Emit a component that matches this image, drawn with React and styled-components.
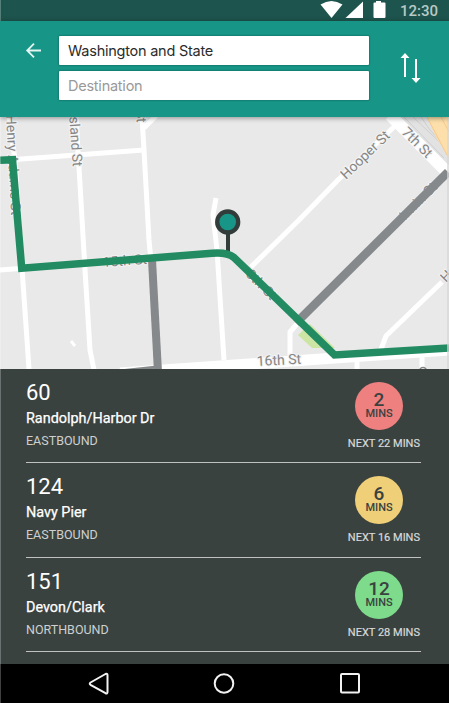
import React from "react";
import styled, { createGlobalStyle } from "styled-components";

const GlobalStyle = createGlobalStyle`
  *, *::before, *::after { box-sizing: border-box; }
  body { margin: 0; background: #000; }
`;

const Screen = styled.div`
  position: relative;
  display: flex;
  flex-direction: column;
  width: 449px;
  height: 703px;
  overflow: hidden;
  font-family: Roboto, sans-serif;

  &::after {
    content: "";
    position: absolute;
    inset: 0 auto 0 0;
    width: 1px;
    background: rgba(255, 255, 255, 0.25);
  }
`;

const StatusBar = styled.div`
  flex: 0 0 21px;
  display: flex;
  align-items: center;
  justify-content: flex-end;
  padding-right: 11px;
  background: #1d544d;
`;

const StatusIcons = styled.svg`
  display: block;
  width: 68px;
  height: 21px;
  margin-right: 12px;
  fill: #fff;
`;

const Clock = styled.span`
  width: 38px;
  font-size: 15px;
  font-weight: 500;
  line-height: 20px;
  color: #b9c9c6;
  white-space: nowrap;
`;

const SearchHeader = styled.header`
  position: relative;
  z-index: 1;
  flex: 0 0 96px;
  display: grid;
  grid-template-columns: 59px 310px 80px;
  background: #179586;
  box-shadow: 0 1px 5px rgba(0, 0, 0, 0.4);
`;

const IconButton = styled.button`
  display: flex;
  align-items: flex-start;
  padding: ${(p) => p.$pad};
  border: 0;
  background: none;

  svg {
    display: block;
  }
`;

const Fields = styled.div`
  display: flex;
  flex-direction: column;
  gap: 6px;
  padding-top: 15px;
`;

const Field = styled.div`
  height: 29px;
  padding-left: 9px;
  border-radius: 1px;
  background: #fff;
  box-shadow: 0 0 2px rgba(0, 0, 0, 0.5);
  font-family: Inter, sans-serif;
  font-size: 14.5px;
  line-height: 30px;
  letter-spacing: -0.24px;
  color: ${(p) => (p.$muted ? "#999" : "#2b2b2b")};
  white-space: nowrap;
`;

const MapCanvas = styled.svg`
  display: block;
  flex: 0 0 252px;
  width: 449px;
  height: 252px;
  background: #e9e9e9;
`;

const Street = styled.path`
  fill: none;
  stroke: #fff;
  stroke-width: ${(p) => p.$w || 5}px;
  stroke-linejoin: round;
`;

const TransitLine = styled.path`
  fill: none;
  stroke: ${(p) => p.$color};
  stroke-width: ${(p) => p.$w}px;
`;

const StreetName = styled.text`
  font-family: Roboto, sans-serif;
  font-size: 14px;
  fill: #858585;
  stroke: #f4f4f4;
  stroke-width: 2px;
  paint-order: stroke;
`;

const Arrivals = styled.ul`
  flex: 0 0 295px;
  margin: 0;
  padding: 0 28px 0 26px;
  background: #3a4240;
  list-style: none;
`;

const Arrival = styled.li`
  display: flex;
  justify-content: space-between;
  height: ${(p) => p.$height}px;
  padding-top: 10px;
  border-bottom: 1px solid #bfc2c1;
`;

const RouteNumber = styled.div`
  margin-top: 1px;
  font-size: 22px;
  line-height: 26px;
  color: #fff;
`;

const RouteName = styled.div`
  margin-top: 2px;
  font-size: 14.4px;
  line-height: 22px;
  -webkit-text-stroke: 0.25px #fff;
  color: #fff;
`;

const Direction = styled.div`
  font-size: 12.5px;
  line-height: 22px;
  color: #cdd0cf;
`;

const Timing = styled.div`
  display: flex;
  flex-direction: column;
  align-items: flex-end;
  padding-top: 3px;
`;

const TimeBadge = styled.div`
  display: flex;
  flex-direction: column;
  align-items: center;
  width: 48px;
  height: 48px;
  margin-right: 18px;
  padding-top: 9px;
  border-radius: 50%;
  background: ${(p) => p.$color};
  color: #3a4240;
`;

const Minutes = styled.span`
  font-size: 19px;
  font-weight: 500;
  line-height: 18px;
`;

const Unit = styled.span`
  font-size: 11px;
  font-weight: 500;
  line-height: 10px;
`;

const NextTime = styled.div`
  margin: 6px 1px 0 0;
  font-size: 11px;
  line-height: 15px;
  -webkit-text-stroke: 0.2px #d8dada;
  color: #d8dada;
  white-space: nowrap;
`;

const NavBar = styled.nav`
  flex: 0 0 39px;
  display: grid;
  grid-template-columns: repeat(3, 24px);
  column-gap: 102px;
  align-items: center;
  padding-left: 87px;
  background: #000;

  svg {
    display: block;
    fill: none;
    stroke: #f2f2f2;
    stroke-width: 2px;
    stroke-linejoin: round;
  }
`;

const arrivals = [
  { route: "60", name: "Randolph/Harbor Dr", dir: "EASTBOUND", mins: 2, next: 22, color: "#ee8080", height: 94 },
  { route: "124", name: "Navy Pier", dir: "EASTBOUND", mins: 6, next: 16, color: "#efcf78", height: 95 },
  { route: "151", name: "Devon/Clark", dir: "NORTHBOUND", mins: 12, next: 28, color: "#7ddb8b", height: 94 },
];

const streets = [
  "M9 117 L15 160 L22 268 L29 369",
  "M76 117 L79 167 L85 270 L90 350 L94 370",
  "M142 117 L144 150 L149 240 L151 262",
  "M15 159.500 L144 150",
  "M144 128 L156 116",
  "M0 270 L20 268.500",
  "M224 360 L217 250 L213 215 L216 198",
  "M397 124 L338 180 L299 220 L251 267",
  "M297 324 L290 332 V366",
  "M442 282 L386 336 L380 352",
  "M357 358 V369",
  "M422 352 V369",
];

const labels = [
  { text: "Henry Adams St", x: 6, y: 115, r: 87 },
  { text: "Rhode Island St", x: 66, y: 70, r: 86 },
  { text: "St", x: 136, y: 110, r: 87 },
  { text: "Hooper St", x: 346, y: 180, r: -44 },
  { text: "7th St", x: 401, y: 133, r: 45 },
  { text: "15th St", x: 103, y: 267, r: -4 },
  { text: "8th St", x: 245, y: 275, r: 45 },
  { text: "Irwin St", x: 405, y: 221, r: -45 },
  { text: "Hubbell", x: 446, y: 283, r: -45 },
  { text: "16th St", x: 257, y: 366, r: -3 },
];

function StreetMap() {
  return (
    <MapCanvas viewBox="0 117 449 252">
      <path d="M395 117 H449 V165 Z" fill="#e2e2e2" />
      <path d="M404 117 L444 158 M413 117 L447 149 M421 117 L430 130 L439 140" fill="none" stroke="#cfcfcf" />
      <path d="M427 117 H449 V158 L436 137 Z" fill="#fcdfaa" />
      <path d="M427 117 L447 155 M441 117 L449 132" stroke="#f6c98c" fill="none" />
      {streets.map((d) => (
        <Street key={d} d={d} />
      ))}
      <Street $w={12} d="M390 115 L449 174" />
      <Street $w={11} d="M120 373 L335 358 L449 350" />
      <Street $w={3} d="M71 341 L75 346" />
      <path d="M298 335 L310 324 L335 348 H312 Z" fill="#cde5a4" />
      <TransitLine $color="#85898b" $w={8} d="M152 260 L158 372" />
      <TransitLine $color="#85898b" $w={3} d="M120 371 L157 367" />
      {labels.map((l) => (
        <StreetName key={l.text} transform={`translate(${l.x} ${l.y}) rotate(${l.r})`}>
          {l.text}
        </StreetName>
      ))}
      <circle cx="423" cy="371" r="3.500" fill="none" stroke="#858585" strokeWidth="1.500" />
      <TransitLine $color="#85898b" $w={8.5} d="M448 172 L296 323" />
      <path d="M228 232 V253" stroke="#323c3a" strokeWidth="4" />
      <TransitLine
        $color="#228b62"
        $w={7.5}
        d="M0 160.200 L12.500 159.700 L21.700 268.200 L212 253.300 Q227 252 234 257.500 L334.500 355 L449 348"
      />
      <circle cx="227.700" cy="222" r="10.500" fill="#179586" stroke="#323c3a" strokeWidth="4.300" />
      <path d="M448 117 V369" stroke="#d7d7d7" strokeWidth="2" opacity="0.7" />
    </MapCanvas>
  );
}

export default function App() {
  return (
    <Screen>
      <GlobalStyle />
      <StatusBar>
        <StatusIcons viewBox="0 0 68 21">
          <path d="M.5 4.500 Q11.500 -2.500 22.500 4.500 L11.500 18 Z" />
          <path d="M43 1.500 V18 H25.500 Z" />
          <path d="M56 1 h5 v1.500 h3.500 q1 0 1 1 V17 q0 1 -1 1 h-10 q-1 0 -1 -1 V3.500 q0 -1 1 -1 H56 Z" />
        </StatusIcons>
        <Clock>12:30</Clock>
      </StatusBar>

      <SearchHeader>
        <IconButton $pad="21px 0 0 25px" aria-label="Back">
          <svg width="18" height="18" viewBox="0 0 18 18" fill="none" stroke="#e4f4f1" strokeWidth="1.800">
            <path d="M16 8.500 H2.500 M9 1.700 L2.200 8.500 L9 15.300" />
          </svg>
        </IconButton>
        <Fields>
          <Field>Washington and State</Field>
          <Field $muted>Destination</Field>
        </Fields>
        <IconButton $pad="32px 0 0 31px" aria-label="Swap">
          <svg width="22" height="32" viewBox="0 0 22 32" fill="#fff">
            <path d="M4 5 H6 V24 H4 Z M5 0 L9.500 5 H.5 Z M15 6 H17 V25 H15 Z M16 30 L11.500 25 H20.500 Z" />
          </svg>
        </IconButton>
      </SearchHeader>

      <StreetMap />

      <Arrivals>
        {arrivals.map((a) => (
          <Arrival key={a.route} $height={a.height}>
            <div>
              <RouteNumber>{a.route}</RouteNumber>
              <RouteName>{a.name}</RouteName>
              <Direction>{a.dir}</Direction>
            </div>
            <Timing>
              <TimeBadge $color={a.color}>
                <Minutes>{a.mins}</Minutes>
                <Unit>MINS</Unit>
              </TimeBadge>
              <NextTime>NEXT {a.next} MINS</NextTime>
            </Timing>
          </Arrival>
        ))}
      </Arrivals>

      <NavBar>
        <svg width="24" height="24" viewBox="0 0 24 24">
          <path d="M3.500 10.500 L18.500 2 Q20.500 1.300 20.500 3 V20 Q20.500 22 18.500 21.200 L3.500 12.800 Q2 11.700 3.500 10.500 Z" />
        </svg>
        <svg width="24" height="24" viewBox="0 0 24 24">
          <circle cx="11" cy="11.500" r="9.300" />
        </svg>
        <svg width="24" height="24" viewBox="0 0 24 24">
          <rect x="2" y="2" width="18" height="18.500" rx="1" />
        </svg>
      </NavBar>
    </Screen>
  );
}
